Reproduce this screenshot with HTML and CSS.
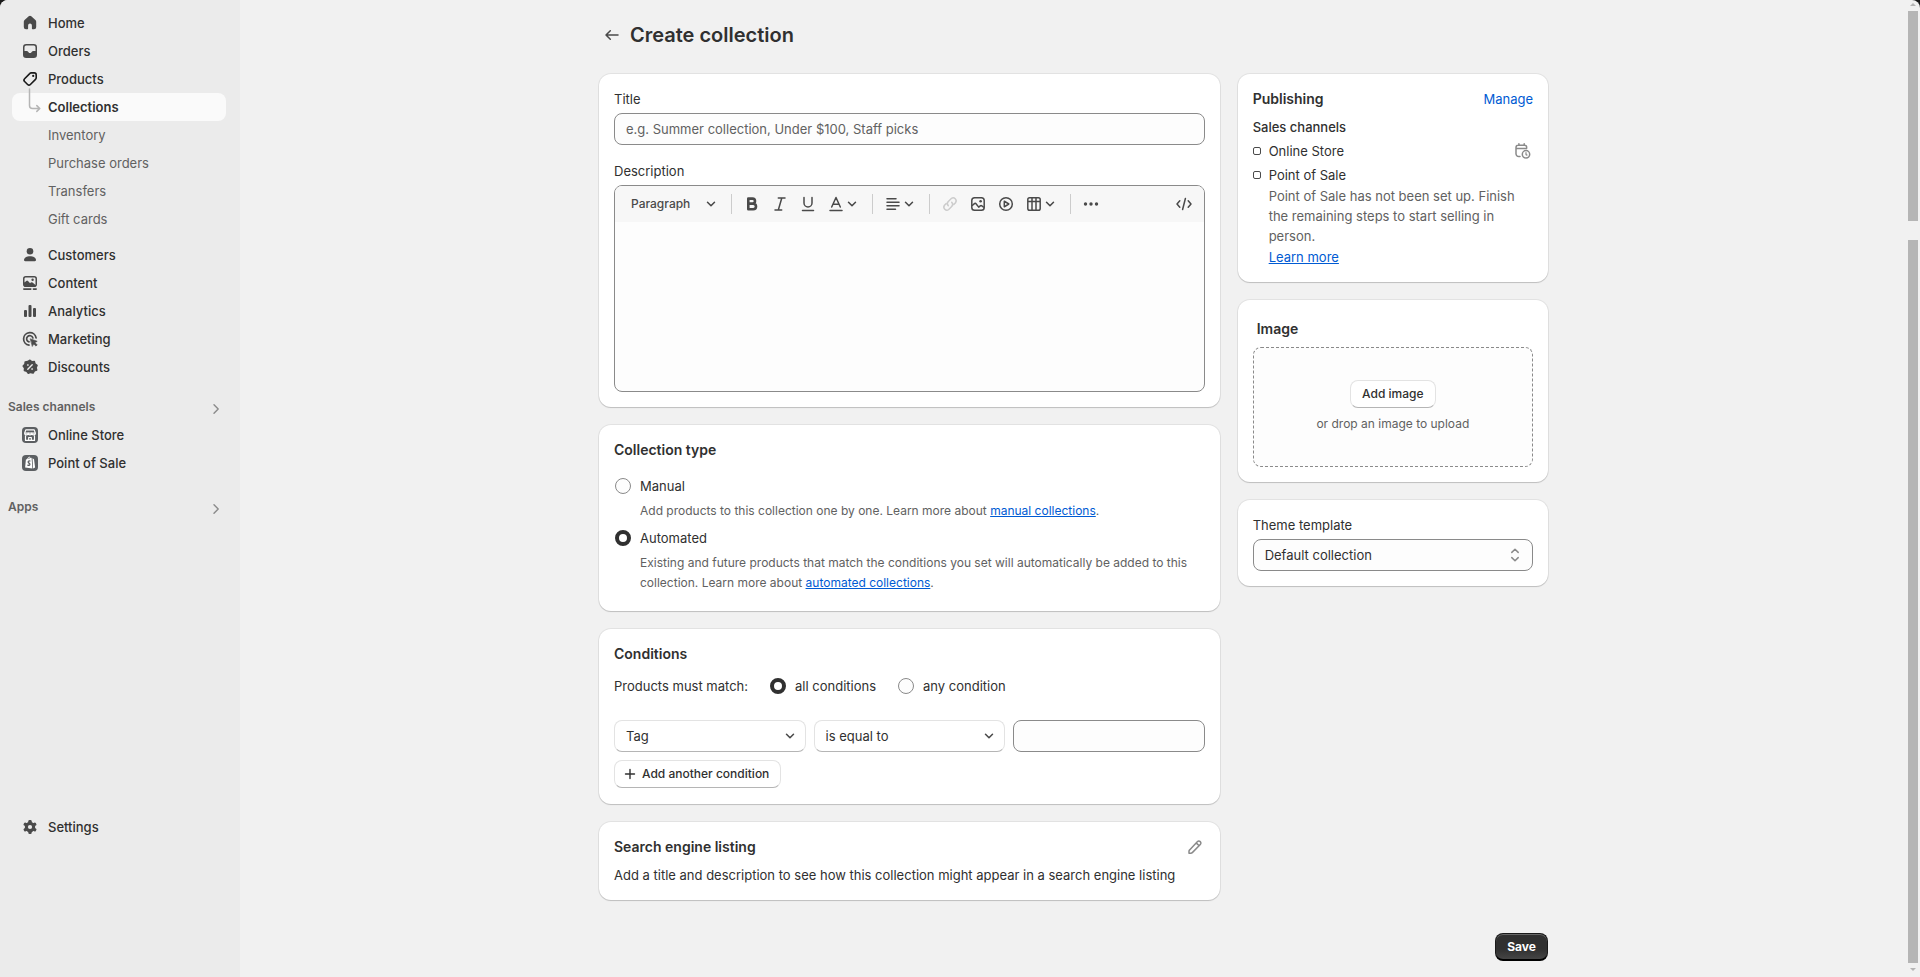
FILE: index.html
```html
<!DOCTYPE html>
<html lang="en">
<head>
<meta charset="utf-8">
<title>Create collection</title>
<link rel="stylesheet" href="styles.css">
</head>
<body>
<svg class="defs" aria-hidden="true">
  <symbol id="chevron" viewBox="0 0 16 16"><path d="M4.500 6.200 8 9.800l3.500-3.600" fill="none" stroke="currentColor" stroke-width="1.500" stroke-linecap="round" stroke-linejoin="round"/></symbol>
  <symbol id="chevron-right" viewBox="0 0 16 16"><path d="m6 3.800 4.200 4.200L6 12.200" fill="none" stroke="currentColor" stroke-width="1.400" stroke-linecap="round" stroke-linejoin="round"/></symbol>
</svg>
<div class="app">
  <nav class="sidebar" aria-label="Main">
    <ul class="nav-list">
      <li><a class="nav-item" href="#"><svg class="icon" viewBox="0 0 20 20" fill="currentColor"><path d="M8.700 3.300a1.900 1.900 0 0 1 2.600 0l4.100 3.700c.5.450.8 1.100.8 1.800v5.200a2.200 2.200 0 0 1-2.200 2.200h-1.500a.6.600 0 0 1-.6-.6v-3.100a1.900 1.900 0 0 0-3.800 0v3.100a.6.600 0 0 1-.6.600H6A2.200 2.200 0 0 1 3.800 14V8.800c0-.7.300-1.350.8-1.800z"/></svg>Home</a></li>
      <li><a class="nav-item" href="#"><svg class="icon" viewBox="0 0 20 20" fill="currentColor"><path fill-rule="evenodd" d="M6.200 3h7.600A3.200 3.200 0 0 1 17 6.200v7.600a3.200 3.200 0 0 1-3.200 3.200H6.200A3.200 3.200 0 0 1 3 13.800V6.200A3.200 3.200 0 0 1 6.200 3zm0 1.500a1.700 1.700 0 0 0-1.700 1.700v3.900h2.400c.5 0 .9.200 1.200.6l.6.800c.6.800 2 .8 2.600 0l.6-.8c.3-.4.700-.6 1.200-.6h2.400V6.200a1.700 1.700 0 0 0-1.700-1.700z"/></svg>Orders</a></li>
      <li><a class="nav-item" href="#"><svg class="icon icon-dark" viewBox="0 0 20 20" fill="none" stroke="currentColor" stroke-width="1.600" stroke-linejoin="round"><path d="M11.300 3.900h2.900a2 2 0 0 1 2 2v2.900c0 .6-.2 1.200-.7 1.600l-5.100 5.100a2 2 0 0 1-2.800 0l-3-3a2 2 0 0 1 0-2.800l5.100-5.100c.4-.5 1-.7 1.600-.7z"/><circle cx="13.200" cy="6.900" r="1.100" fill="currentColor" stroke="none"/></svg>Products</a>
        <ul class="sub-list">
          <li><a class="nav-item is-active" href="#" aria-current="page"><svg class="branch" viewBox="0 0 20 32" fill="none" stroke="#b5b5b5" stroke-width="1.500" stroke-linecap="round" stroke-linejoin="round"><path d="M9.500 1v16.500a3 3 0 0 0 3 3h7M16.800 17.600l3 2.900-3 2.900"/></svg>Collections</a></li>
          <li><a class="nav-item sub" href="#">Inventory</a></li>
          <li><a class="nav-item sub" href="#">Purchase orders</a></li>
          <li><a class="nav-item sub" href="#">Transfers</a></li>
          <li><a class="nav-item sub" href="#">Gift cards</a></li>
        </ul></li>
      <li><a class="nav-item" href="#"><svg class="icon" viewBox="0 0 20 20" fill="currentColor"><circle cx="10" cy="6.300" r="3.300"/><path d="M4 15c0-2.400 2.800-3.800 6-3.800s6 1.400 6 3.800c0 .7-.5 1.200-1.200 1.200H5.200C4.500 16.200 4 15.700 4 15z"/></svg>Customers</a></li>
      <li><a class="nav-item" href="#"><svg class="icon" viewBox="0 0 20 20" fill="currentColor"><path fill-rule="evenodd" d="M5.800 3h8.400A2.800 2.800 0 0 1 17 5.800v5.400a2.800 2.800 0 0 1-2.800 2.800H5.800A2.800 2.800 0 0 1 3 11.200V5.800A2.800 2.800 0 0 1 5.800 3zm0 1.500c-.7 0-1.300.6-1.300 1.300v3.700l1.700-1.600a1.300 1.300 0 0 1 1.800 0l2.100 2.300.7-.6a1.300 1.300 0 0 1 1.700 0l3 2.500V5.800c0-.7-.6-1.300-1.300-1.300z"/><circle cx="12.600" cy="6.800" r="1.200"/><rect x="3" y="15.300" width="8.600" height="1.600" rx=".8"/><rect x="12.600" y="15.300" width="4.400" height="1.600" rx=".8"/></svg>Content</a></li>
      <li><a class="nav-item" href="#"><svg class="icon" viewBox="0 0 20 20" fill="currentColor"><rect x="4" y="9" width="3" height="7" rx="1"/><rect x="8.500" y="4" width="3" height="12" rx="1"/><rect x="13" y="7" width="3" height="9" rx="1"/></svg>Analytics</a></li>
      <li><a class="nav-item" href="#"><svg class="icon" viewBox="0 0 20 20" fill="none" stroke="currentColor" stroke-width="1.700" stroke-linecap="round"><path d="M16.100 8.800A6.300 6.300 0 1 0 9 16.200"/><path d="M12.900 8.900A3.200 3.200 0 1 0 9 12.900"/><path d="m10.500 9.900 6.700 2.400-2.300 1.300 2.300 2.300-1.200 1.200-2.300-2.200-1.200 2.200z" fill="currentColor" stroke-width=".7" stroke-linejoin="round"/></svg>Marketing</a></li>
      <li><a class="nav-item" href="#"><svg class="icon" viewBox="0 0 20 20"><path fill="currentColor" stroke="currentColor" stroke-width="1.500" stroke-linejoin="round" d="m10 3.200 1.900 1.600 2.500-.2.600 2.400 2.100 1.300-1 2.300.6 2.400-2.300.9-1.300 2.100-2.400-.6-2.400.8-1.500-1.900-2.400-.8.200-2.400-1.400-2 1.700-1.800.3-2.400 2.500-.3z"/><g stroke="#ebebeb" fill="#ebebeb"><path d="m7.800 12.300 4.400-4.500" stroke-width="1.400" stroke-linecap="round"/><circle cx="7.900" cy="8" r=".6" stroke-width=".6"/><circle cx="12.100" cy="12" r=".6" stroke-width=".6"/></g></svg>Discounts</a></li>
    </ul>
    <section class="nav-section">
      <button class="nav-heading" type="button"><span>Sales channels</span><svg><use href="#chevron-right"/></svg></button>
      <ul class="nav-list">
        <li><a class="nav-item" href="#"><svg class="icon" viewBox="0 0 20 20"><rect x="2" y="2" width="16" height="16" rx="4" fill="#5c5f62"/><g fill="none" stroke="#fff" stroke-width="1.200" stroke-linejoin="round"><path d="M5.800 4.900h8.400l1.200 3.200H4.600z"/><path d="M4.600 8.200a1.800 1.600 0 0 0 3.600 0 1.800 1.600 0 0 0 3.600 0 1.800 1.600 0 0 0 3.600 0M5.500 10.500v4.900h9v-4.900M8.700 15.300v-2.800h2.600v2.800"/></g></svg>Online Store</a></li>
        <li><a class="nav-item" href="#"><svg class="icon" viewBox="0 0 20 20"><rect x="2" y="2" width="16" height="16" rx="4" fill="#5c5f62"/><path fill="#fff" d="m5.900 6.400 5.700-1.600.8 10.800-7.300-1.100zM12.500 5.200l1.500 1.100 1.100 8.300-2 .9z"/><path d="M7.600 6.800c0-2.700 2.500-3.800 3.100-.8" fill="none" stroke="#fff"/><path d="M10.400 8.200c-1.300-.7-2.400-.1-2.200.9.200 1 1.900 1.200 1.700 2.400-.1 1-1.300 1.200-2.400.4" fill="none" stroke="#5c5f62" stroke-width="1.300"/></svg>Point of Sale</a></li>
      </ul>
    </section>
    <section class="nav-section">
      <button class="nav-heading" type="button"><span>Apps</span><svg><use href="#chevron-right"/></svg></button>
    </section>
    <a class="nav-item settings" href="#"><svg class="icon" viewBox="0 0 20 20"><g fill="currentColor"><circle cx="10" cy="10" r="5.200"/><rect x="8.300" y="3" width="3.400" height="14" rx="1.200"/><rect x="8.300" y="3" width="3.400" height="14" rx="1.200" transform="rotate(60 10 10)"/><rect x="8.300" y="3" width="3.400" height="14" rx="1.200" transform="rotate(120 10 10)"/></g><circle cx="10" cy="10" r="2.100" fill="#ebebeb"/></svg>Settings</a>
  </nav>

  <main class="main">
    <form class="page">
      <header class="page-head">
        <a class="back" href="#" aria-label="Back"><svg viewBox="0 0 20 20" fill="none" stroke="currentColor" stroke-width="1.500" stroke-linecap="round" stroke-linejoin="round"><path d="M16 10H4.300M8.300 5.700 4 10l4.300 4.300"/></svg></a>
        <h1>Create collection</h1>
      </header>
      <div class="columns">
        <div class="stack">
          <section class="card details">
            <div class="field">
              <label for="title">Title</label>
              <input class="text-input" id="title" type="text" placeholder="e.g. Summer collection, Under $100, Staff picks">
            </div>
            <div class="field">
              <label for="description">Description</label>
              <div class="editor">
                <div class="toolbar">
                  <button type="button" class="paragraph">Paragraph<svg><use href="#chevron"/></svg></button>
                  <span class="divider"></span>
                  <button type="button" class="tool" aria-label="Bold"><svg class="icon" viewBox="0 0 20 20" fill="none" stroke="currentColor" stroke-width="2.600" stroke-linejoin="round"><path d="M6.300 4.600h4.200a2.500 2.500 0 0 1 0 5H6.300zM6.300 9.700h4.900a2.800 2.800 0 0 1 0 5.600H6.300z"/></svg></button>
                  <button type="button" class="tool" aria-label="Italic"><svg class="icon" viewBox="0 0 20 20" fill="none" stroke="currentColor" stroke-width="1.500" stroke-linecap="round"><path d="M8.300 4H15M5 16h6.700M11.800 4 8.300 16"/></svg></button>
                  <button type="button" class="tool" aria-label="Underline"><svg class="icon" viewBox="0 0 20 20" fill="none" stroke="currentColor" stroke-width="1.500" stroke-linecap="round"><path d="M6 3.500V9a4 4 0 0 0 8 0V3.500M4.500 16.500h11"/></svg></button>
                  <button type="button" class="tool wide" aria-label="Text colour"><svg class="icon" viewBox="0 0 20 20" fill="none" stroke="currentColor" stroke-width="1.500" stroke-linecap="round" stroke-linejoin="round"><path d="M5.700 13 10 3.500l4.300 9.500M7 10.200h6M4 16.500h12"/></svg><svg><use href="#chevron"/></svg></button>
                  <span class="divider"></span>
                  <button type="button" class="tool wide" aria-label="Alignment"><svg class="icon" viewBox="0 0 20 20" fill="none" stroke="currentColor" stroke-width="1.500" stroke-linecap="round"><path d="M4 4.800h9M4 8.300h12M4 11.800h12M4 15.300h8.500"/></svg><svg><use href="#chevron"/></svg></button>
                  <span class="divider"></span>
                  <button type="button" class="tool" aria-label="Link" disabled><svg class="icon" viewBox="0 0 20 20" fill="none" stroke="currentColor" stroke-width="1.500" stroke-linecap="round"><path d="M8.300 11.700a3 3 0 0 1 0-4.200l3-3a3 3 0 0 1 4.200 4.200l-1.700 1.700"/><path d="M11.700 8.300a3 3 0 0 1 0 4.200l-3 3a3 3 0 0 1-4.200-4.200l1.700-1.700"/></svg></button>
                  <button type="button" class="tool" aria-label="Insert image"><svg class="icon" viewBox="0 0 20 20" fill="none" stroke="currentColor" stroke-width="1.500" stroke-linejoin="round"><rect x="3.800" y="3.800" width="12.400" height="12.400" rx="2.800"/><path d="m4 11.700 2.400-2.100c.5-.5 1.200-.4 1.600.1l2.700 3.400 1.600-1.300c.5-.4 1-.4 1.500 0l2.200 1.700"/><circle cx="12.600" cy="7.300" r="1.300" fill="currentColor" stroke="none"/></svg></button>
                  <button type="button" class="tool" aria-label="Insert video"><svg class="icon" viewBox="0 0 20 20" fill="none" stroke="currentColor" stroke-width="1.500" stroke-linejoin="round"><circle cx="10" cy="10" r="6.300"/><path d="M8.300 7.200v5.600l4.500-2.800z"/></svg></button>
                  <button type="button" class="tool wide" aria-label="Insert table"><svg class="icon" viewBox="0 0 20 20" fill="none" stroke="currentColor" stroke-width="1.500"><rect x="3.800" y="3.800" width="12.400" height="12.400" rx="1.800"/><path d="M4 7.500h12M8 4v12M12 4v12"/></svg><svg><use href="#chevron"/></svg></button>
                  <span class="divider"></span>
                  <button type="button" class="tool" aria-label="More"><svg class="icon" viewBox="0 0 20 20" fill="currentColor"><circle cx="4.500" cy="10" r="1.700"/><circle cx="10" cy="10" r="1.700"/><circle cx="15.500" cy="10" r="1.700"/></svg></button>
                  <button type="button" class="tool code" aria-label="Show HTML"><svg class="icon" viewBox="0 0 20 20" fill="none" stroke="currentColor" stroke-width="1.500" stroke-linecap="round" stroke-linejoin="round"><path d="M5.800 6.800 3 10l2.800 3.200M14.200 6.800 17 10l-2.800 3.200M11.400 4.500l-2.800 11"/></svg></button>
                </div>
                <textarea id="description"></textarea>
              </div>
            </div>
          </section>

          <section class="card">
            <h2>Collection type</h2>
            <div class="choices">
              <div class="choice">
                <input type="radio" name="type" id="manual">
                <label for="manual">Manual</label>
                <p>Add products to this collection one by one. Learn more about <a href="#">manual collections</a>.</p>
              </div>
              <div class="choice">
                <input type="radio" name="type" id="automated" checked>
                <label for="automated">Automated</label>
                <p>Existing and future products that match the conditions you set will automatically be added to this collection. Learn more about <a href="#">automated collections</a>.</p>
              </div>
            </div>
          </section>

          <section class="card conditions">
            <h2>Conditions</h2>
            <div class="match">
              <span>Products must match:</span>
              <span class="option"><input type="radio" name="match" id="all" checked><label for="all">all conditions</label></span>
              <span class="option"><input type="radio" name="match" id="any"><label for="any">any condition</label></span>
            </div>
            <div class="rule">
              <div class="select soft"><select aria-label="Field"><option>Tag</option></select><svg><use href="#chevron"/></svg></div>
              <div class="select soft"><select aria-label="Relation"><option>is equal to</option></select><svg><use href="#chevron"/></svg></div>
              <input class="text-input" type="text" aria-label="Value">
            </div>
            <button type="button" class="button add"><svg viewBox="0 0 16 16" fill="none" stroke="currentColor" stroke-width="1.400" stroke-linecap="round"><path d="M8 3.500v9M3.500 8h9"/></svg>Add another condition</button>
          </section>

          <section class="card seo">
            <div class="card-head">
              <h2>Search engine listing</h2>
              <button type="button" class="icon-button" aria-label="Edit"><svg class="icon" viewBox="0 0 20 20" fill="none" stroke="currentColor" stroke-width="1.500" stroke-linejoin="round"><path d="M12.300 4.700a2.050 2.050 0 0 1 3 2.900l-8 8c-.4.400-.9.600-1.400.6H4v-1.900c0-.5.200-1 .6-1.400zM11.200 5.900l2.900 2.900"/></svg></button>
            </div>
            <p>Add a title and description to see how this collection might appear in a search engine listing</p>
          </section>
        </div>

        <aside class="stack">
          <section class="card publishing">
            <div class="card-head">
              <h2>Publishing</h2>
              <a href="#">Manage</a>
            </div>
            <h3>Sales channels</h3>
            <ul class="channels">
              <li><span class="marker"></span><span>Online Store</span><button type="button" class="icon-button" aria-label="Schedule"><svg class="icon" viewBox="0 0 20 20" fill="none" stroke="currentColor" stroke-width="1.500" stroke-linecap="round" stroke-linejoin="round"><path d="M7 15.500H5.700A2.700 2.700 0 0 1 3 12.800V6.500a2.200 2.200 0 0 1 2.200-2.200h6.300a2.200 2.200 0 0 1 2.200 2.200M3.200 7.500h10.500M5.900 2.800v1.500M11.200 2.800v1.500"/><circle cx="13" cy="13.300" r="3.700"/><path d="M13 11.700v1.900l1 .5" stroke-width="1.200"/></svg></button></li>
              <li><span class="marker"></span><span>Point of Sale</span></li>
            </ul>
            <div class="note">
              <p>Point of Sale has not been set up. Finish the remaining steps to start selling in person.</p>
              <a href="#">Learn more</a>
            </div>
          </section>

          <section class="card image-card">
            <h2>Image</h2>
            <div class="dropzone">
              <button type="button" class="button">Add image</button>
              <p>or drop an image to upload</p>
            </div>
          </section>

          <section class="card field">
            <label for="template">Theme template</label>
            <div class="select"><select id="template"><option>Default collection</option></select><svg viewBox="0 0 16 16" fill="none" stroke="currentColor" stroke-width="1.500" stroke-linecap="round" stroke-linejoin="round"><path d="M4.800 5.400 8 2.300l3.200 3.100M4.800 10.600 8 13.700l3.200-3.100"/></svg></div>
          </section>
        </aside>
      </div>
      <footer class="actions"><button type="submit" class="save">Save</button></footer>
    </form>
  </main>

  <div class="scroll-rail" aria-hidden="true">
    <span class="arrow up"></span>
    <span class="thumb"></span>
    <span class="thumb long"></span>
    <span class="arrow down"></span>
  </div>
</div>
</body>
</html>
```

FILE: styles.css
```css
* { box-sizing: border-box; }

body {
  margin: 0;
  background: #1a1a1a;
  color: #303030;
  font: 13px/20px Inter, "Liberation Sans", sans-serif;
}

h1, h2, h3, p, ul { margin: 0; padding: 0; }
ul { list-style: none; }
button, input, select, textarea { font: inherit; color: inherit; margin: 0; }
button { border: 0; background: none; padding: 0; cursor: pointer; }
svg { width: 16px; height: 16px; display: block; flex: none; }
.icon { width: 20px; height: 20px; }
.defs { display: none; }
a { color: #005bd3; }

.app {
  display: flex;
  min-height: 100vh;
  background: #f1f1f1;
  border-radius: 8px 8px 0 0;
  overflow: hidden;
}

/* Sidebar */
.sidebar {
  display: flex;
  flex-direction: column;
  flex: none;
  width: 240px;
  padding: 9px 14px 136px 12px;
  background: #ebebeb;
}
.nav-item {
  display: flex;
  align-items: center;
  gap: 8px;
  height: 28px;
  padding-left: 8px;
  border-radius: 8px;
  color: #303030;
  font-weight: 500;
  text-decoration: none;
}
.nav-item .icon { color: #4a4a4a; }
.nav-item .icon-dark { color: #1a1a1a; }
.sub-list { padding-bottom: 8px; }
.nav-item.is-active {
  position: relative;
  padding-left: 36px;
  background: #fafafa;
  font-weight: 600;
}
.branch {
  position: absolute;
  left: 8px;
  top: -5px;
  width: 20px;
  height: 32px;
  overflow: visible;
}
.nav-item.sub { padding-left: 36px; color: #616161; font-weight: 400; }
.nav-section { padding-top: 16px; }
.nav-section + .nav-section { padding-top: 20px; }
.nav-heading {
  display: flex;
  align-items: center;
  justify-content: space-between;
  width: calc(100% + 4px);
  height: 24px;
  margin-left: -4px;
  padding-right: 2px;
  color: #616161;
  font-size: 12px;
  font-weight: 600;
}
.nav-heading span { padding-bottom: 4px; }
.nav-heading svg { color: #8a8a8a; }
.settings { margin-top: auto; }

/* Page */
.main { flex: 1; padding: 0 24px; }
.page { max-width: 949px; margin: 0 auto; }
.page-head {
  display: flex;
  align-items: center;
  gap: 8px;
  padding: 21px 0 25px 3px;
}
.back { color: #4a4a4a; }
.back svg { width: 20px; height: 20px; }
h1 { font-size: 20px; line-height: 28px; font-weight: 600; }
h2 { font-size: 14px; line-height: 20px; font-weight: 600; }
h3 { font-size: 13px; line-height: 20px; font-weight: 500; }

.columns { display: grid; grid-template-columns: 2fr 1fr; gap: 18px; align-items: start; }
.stack { display: flex; flex-direction: column; gap: 18px; }
.card {
  padding: 15px;
  background: #fff;
  border-radius: 12px;
  box-shadow: 0 1px 1px rgba(0, 0, 0, .16), 0 0 0 1px rgba(0, 0, 0, .06);
}
.card-head { display: flex; align-items: center; justify-content: space-between; }
.details { display: flex; flex-direction: column; gap: 16px; }
.field { display: flex; flex-direction: column; gap: 4px; }

.text-input, select {
  width: 100%;
  height: 32px;
  padding: 0 11px;
  border: 1px solid #8a8a8a;
  border-radius: 8px;
  background: #fdfdfd;
}
.text-input::placeholder { color: #616161; opacity: 1; }
.select { position: relative; }
.select svg { position: absolute; right: 10px; top: 8px; color: #8a8a8a; pointer-events: none; }
select { appearance: none; padding-right: 32px; }
.soft svg { right: 8px; color: #4a4a4a; }
.soft select {
  border-color: #e3e3e3;
  border-bottom-color: #b5b5b5;
  background: #fff;
}

/* Rich text editor */
.editor {
  border: 1px solid #8a8a8a;
  border-radius: 8px;
  background: #fdfdfd;
  overflow: hidden;
}
.toolbar {
  display: flex;
  align-items: center;
  height: 36px;
  padding: 0 6px 0 8px;
  background: #f7f7f7;
  color: #4a4a4a;
}
.paragraph {
  display: flex;
  align-items: center;
  justify-content: space-between;
  width: 102px;
  height: 28px;
  padding: 0 6px 0 8px;
  font-size: 12px;
  font-weight: 500;
}
.divider { width: 1px; height: 20px; margin: 0 6px; background: #ccc; }
.tool { display: flex; align-items: center; width: 28px; height: 28px; padding: 0 4px; }
.tool.wide { width: 44px; padding-right: 0; }
.tool.wide svg + svg { margin-left: -2px; }
.tool:disabled { color: #ccc; cursor: default; }
.tool.code { margin-left: auto; }
textarea {
  display: block;
  width: 100%;
  height: 169px;
  padding: 12px;
  border: 0;
  background: none;
  resize: none;
}

/* Radios */
input[type="radio"] {
  appearance: none;
  width: 16px;
  height: 16px;
  border: 1px solid #8a8a8a;
  border-radius: 50%;
  background: #fdfdfd;
}
input[type="radio"]:checked { border: 4px solid #303030; background: #fff; }
.choices { display: grid; gap: 7px; padding: 16px 0 3px; }
.choice {
  display: grid;
  grid-template-columns: 16px 1fr;
  column-gap: 9px;
  row-gap: 5px;
  align-items: center;
  padding-left: 1px;
}
.choice p { grid-column: 2; font-size: 12px; color: #616161; }

/* Conditions */
.conditions { padding-bottom: 16px; }
.match { display: flex; align-items: center; padding: 12px 0 24px; }
.option { display: flex; align-items: center; gap: 9px; margin-left: 22px; }
.rule { display: grid; grid-template-columns: repeat(3, 1fr); gap: 8px; }
.button {
  display: flex;
  align-items: center;
  height: 28px;
  padding: 0 11px;
  border: 1px solid #e3e3e3;
  border-bottom-color: #b5b5b5;
  border-radius: 8px;
  background: #fff;
  font-size: 12px;
  font-weight: 500;
}
.add { gap: 4px; margin-top: 8px; padding-left: 7px; }
.icon-button { color: #8a8a8a; }
.seo p { margin-top: 8px; }

/* Publishing */
.publishing a { text-decoration: none; }
.publishing h3 { margin-top: 8px; }
.channels { display: grid; gap: 4px; margin-top: 4px; }
.channels li { display: flex; align-items: center; gap: 8px; }
.channels .icon-button { margin-left: auto; }
.marker { width: 8px; height: 8px; border: 1px solid #4a4a4a; border-radius: 2px; }
.note { padding: 1px 10px 0 16px; color: #616161; }
.publishing .note a { display: inline-block; margin-top: 1px; text-decoration: underline; }

/* Image */
.image-card h2 { padding: 4px 4px 8px; }
.dropzone {
  display: flex;
  flex-direction: column;
  align-items: center;
  gap: 6px;
  padding: 32px 12px;
  border: 1px dashed #8a8a8a;
  border-radius: 8px;
  background: #fdfdfd;
  color: #616161;
  font-size: 12px;
}
.dropzone .button { color: #303030; }

.actions { display: flex; justify-content: flex-end; padding: 33px 0 16px; }
.save {
  height: 28px;
  padding: 0 11px;
  border: 1px solid #1a1a1a;
  border-bottom: 2px solid #000;
  border-radius: 8px;
  background: linear-gradient(#303030 60%, #454545);
  box-shadow: inset 0 1px 0 #666;
  color: #fff;
  font-size: 12px;
  font-weight: 700;
}

/* Scroll rail */
.scroll-rail {
  display: flex;
  flex-direction: column;
  flex: none;
  width: 13px;
  padding: 3px 2px 6px 1px;
}
.thumb { flex: 210; background: #b5b5b5; }
.thumb.long { flex: 723; margin-top: 19px; }
.arrow { align-self: center; border: 3px solid transparent; }
.up { border-top: 0; border-bottom-color: #b5b5b5; margin-bottom: 5px; }
.down { border-bottom: 0; border-top-color: #b5b5b5; margin-top: 5px; }
```
